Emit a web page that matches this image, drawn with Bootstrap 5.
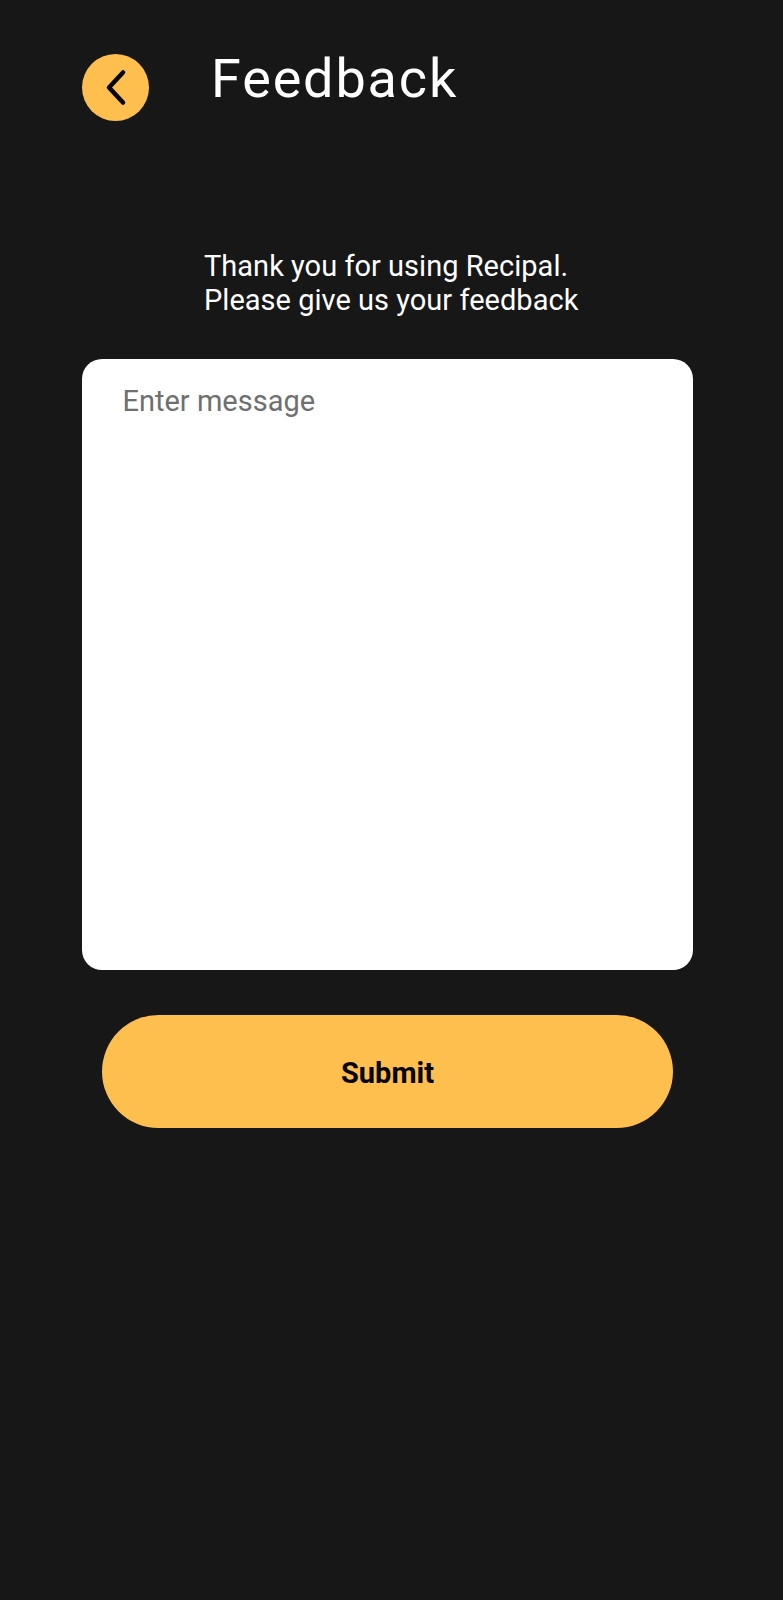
<!DOCTYPE html>
<html lang="en">
<head>
<meta charset="utf-8">
<meta name="viewport" content="width=device-width, initial-scale=1">
<title>Feedback</title>
<link href="https://cdn.jsdelivr.net/npm/bootstrap@5.3.0/dist/css/bootstrap.min.css" rel="stylesheet">
<style>
body { background: #171717; color: #fff; font-family: Roboto, sans-serif; font-size: 29px; line-height: 34px; }
.screen { min-height: 1600px; padding: 54px 90px 0 82px; }
.top-bar { height: 67px; gap: 62px; }
.back-btn { width: 67px; height: 67px; background: #ffbf4f; }
.page-title { font-size: 54px; line-height: 64px; letter-spacing: 1.85px; margin-top: -7px; }
.intro { margin: 128px 0 42px 122px; letter-spacing: .02px; }
.message-box { height: 611px; border-radius: 20px; padding: 25px 40.5px; font-size: 29px; line-height: 34px; resize: none; }
.message-box, .message-box:focus { background: #fff; color: #171717; box-shadow: none; }
.message-box::placeholder { color: #6f6f6f; opacity: 1; }
.submit-btn, .submit-btn:hover { height: 113px; margin: 45px 20px 0; padding: 2px 0 0; background: #ffbf4f; color: #060503; font-size: 29px; line-height: 34px; }
</style>
</head>
<body>
<main class="screen d-flex flex-column">
  <header class="top-bar d-flex align-items-start">
    <button type="button" class="back-btn btn rounded-circle border-0 p-0 flex-shrink-0 d-flex" aria-label="Back">
      <svg width="67" height="67" viewBox="0 0 67 67" fill="none" stroke="#050402" stroke-width="4.5" stroke-linecap="round" stroke-linejoin="round"><path d="M41 18.5 27 33.5 41 48.5"/></svg>
    </button>
    <h1 class="page-title fw-normal mb-0">Feedback</h1>
  </header>
  <p class="intro">Thank you for using Recipal.<br>Please give us your feedback</p>
  <textarea class="message-box form-control border-0" placeholder="Enter message" aria-label="Message"></textarea>
  <button type="button" class="submit-btn btn rounded-pill border-0 fw-bold">Submit</button>
</main>
<script src="https://cdn.jsdelivr.net/npm/bootstrap@5.3.0/dist/js/bootstrap.bundle.min.js"></script>
</body>
</html>
